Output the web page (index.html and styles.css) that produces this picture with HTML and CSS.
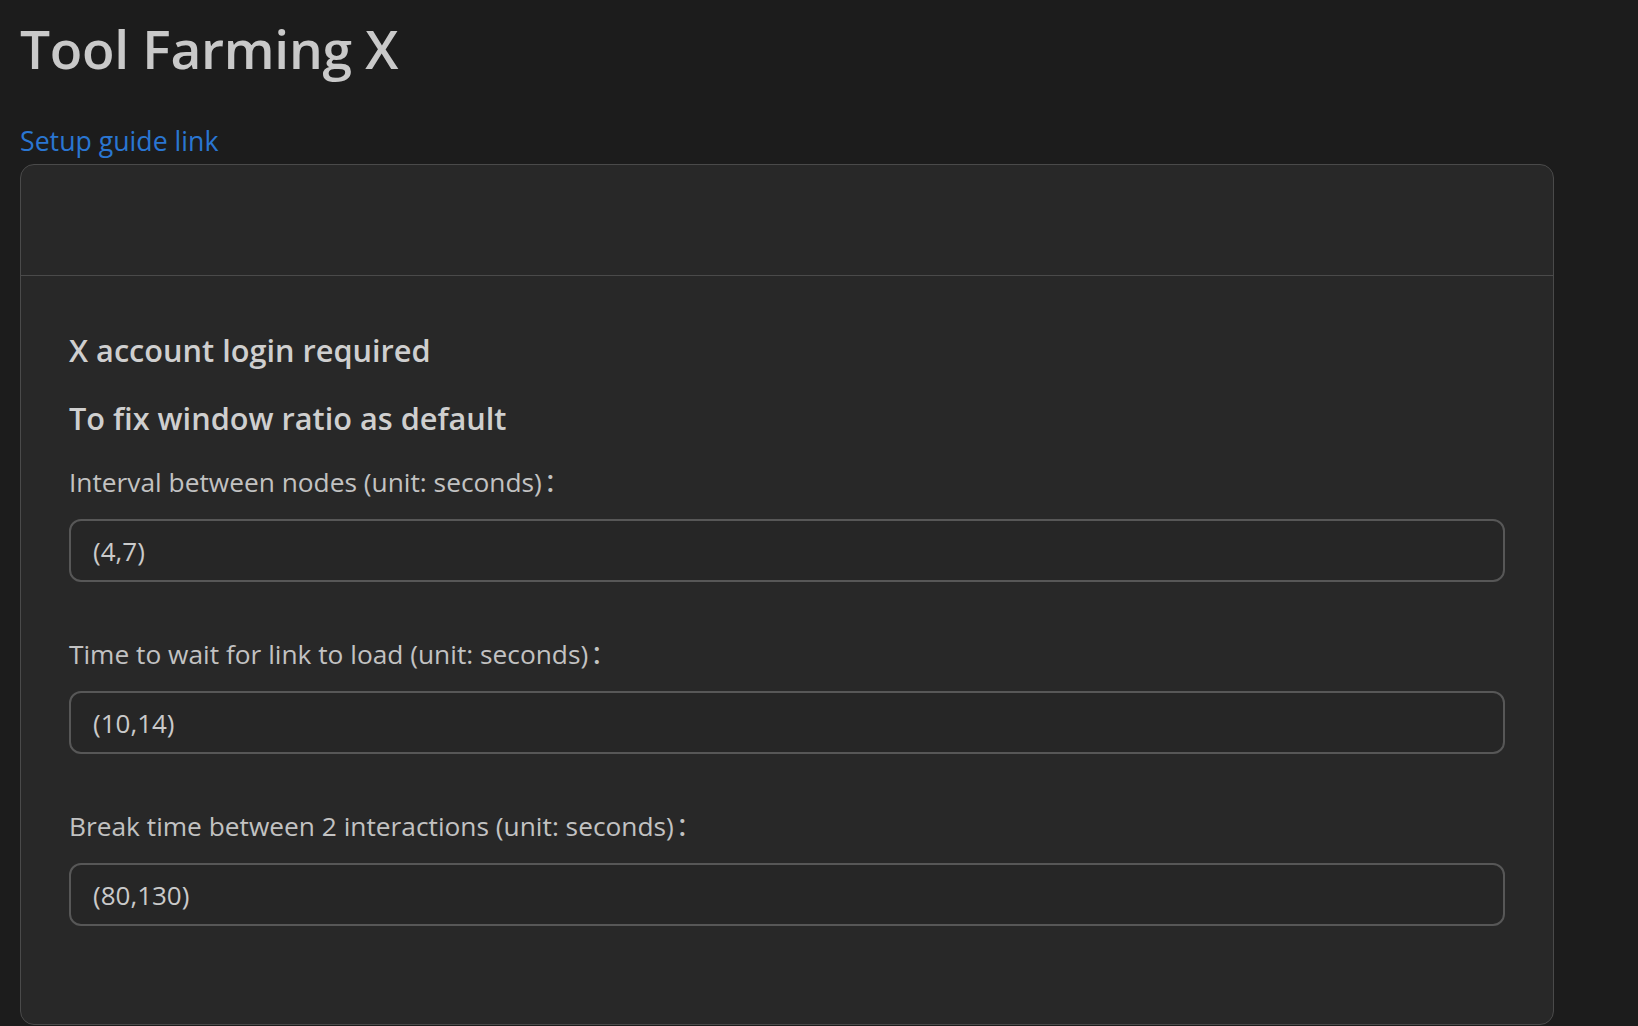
FILE: index.html
```html
<!DOCTYPE html>
<html lang="en">
<head>
<meta charset="utf-8">
<title>Tool Farming X</title>
<link rel="stylesheet" href="styles.css">
</head>
<body>
  <main class="page">
    <h1 class="title">Tool Farming X</h1>
    <a class="guide-link" href="#">Setup guide link</a>
    <section class="card">
      <div class="card-header"></div>
      <div class="card-body">
        <h5 class="note">X account login required</h5>
        <h5 class="note note-second">To fix window ratio as default</h5>
        <div class="field">
          <label class="field-label" for="f1">Interval between nodes (unit: seconds)<span class="colon">：</span></label>
          <input class="field-input" id="f1" type="text" value="(4,7)">
        </div>
        <div class="field">
          <label class="field-label" for="f2">Time to wait for link to load (unit: seconds)<span class="colon">：</span></label>
          <input class="field-input" id="f2" type="text" value="(10,14)">
        </div>
        <div class="field field-last">
          <label class="field-label" for="f3">Break time between 2 interactions (unit: seconds)<span class="colon">：</span></label>
          <input class="field-input" id="f3" type="text" value="(80,130)">
        </div>
      </div>
    </section>
  </main>
</body>
</html>
```
FILE: styles.css
```css
* { box-sizing: border-box; }

html, body {
  margin: 0;
  padding: 0;
  background: #1c1c1c;
}

body {
  font-family: "Open Sans", "Noto Sans", "Noto Sans CJK SC", sans-serif;
  color: #c4c4c4;
  overflow: hidden;
}

.page {
  display: flex;
  flex-direction: column;
  align-items: flex-start;
  padding: 0 84px 0 20px;
}

.title {
  margin: 15px 0 0 0;
  font-size: 53.3px;
  line-height: 67px;
  font-weight: 600;
  color: #c9c9c9;
  letter-spacing: -0.3px;
}

.guide-link {
  margin-top: 38px;
  font-size: 26.7px;
  line-height: 42px;
  color: #2a76d2;
  text-decoration: none;
}

.card {
  margin-top: 2px;
  width: 100%;
  background: #282828;
  border: 1px solid #4a4a4a;
  border-radius: 14px;
  display: flex;
  flex-direction: column;
}

.card-header {
  height: 111px;
  border-bottom: 1px solid #4a4a4a;
}

.card-body {
  padding: 53px 48px 98px 48px;
  display: flex;
  flex-direction: column;
}

.note {
  margin: 0;
  font-size: 30.7px;
  line-height: 42px;
  font-weight: 600;
  color: #cfcfcf;
}

.note-second {
  margin-top: 26px;
}

.field {
  margin-top: 21px;
  display: flex;
  flex-direction: column;
}

.field + .field {
  margin-top: 50px;
}

.field-label {
  font-size: 26.3px;
  line-height: 42px;
  color: #c2c2c2;
}

.colon {
  font-family: "Noto Sans CJK SC", sans-serif;
  margin-left: 2px;
}

.field-input {
  margin-top: 16px;
  height: 63px;
  width: 100%;
  padding: 0 22px;
  background: #262626;
  border: 2px solid #575757;
  border-radius: 12px;
  font-family: "Open Sans", "Noto Sans", sans-serif;
  font-size: 26px;
  color: #cacaca;
  outline: none;
}
```
